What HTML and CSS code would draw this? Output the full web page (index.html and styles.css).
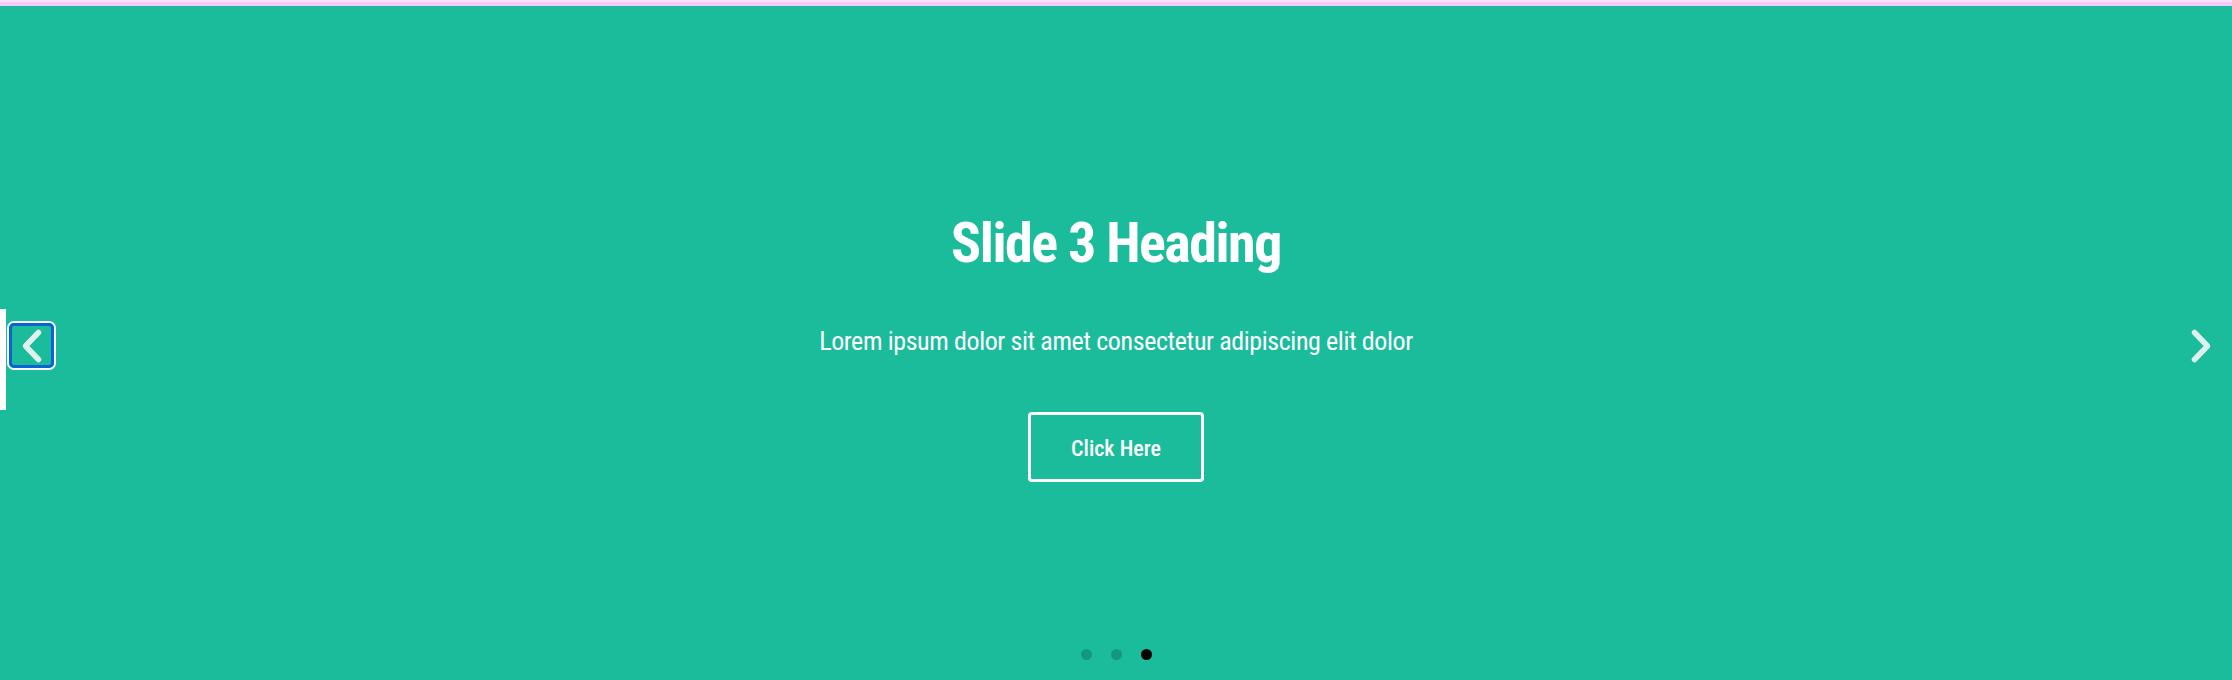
FILE: index.html
```html
<!DOCTYPE html>
<html lang="en">
<head>
<meta charset="utf-8">
<title>Slider</title>
<link rel="stylesheet" href="styles.css">
</head>
<body>
<div class="topbar"></div>
<section class="slider">
  <div class="edge"></div>
  <button class="arrow arrow-prev" aria-label="Previous">
    <svg viewBox="0 0 24 36" width="24" height="36"><path d="M18.5 4.5 L5.5 18 L18.5 31.5" fill="none" stroke="currentColor" stroke-width="5.5" stroke-linecap="round" stroke-linejoin="round"/></svg>
  </button>
  <div class="slide">
    <h2 class="heading">Slide 3 Heading</h2>
    <p class="text">Lorem ipsum dolor sit amet consectetur adipiscing elit dolor</p>
    <a class="cta" href="#">Click Here</a>
  </div>
  <button class="arrow arrow-next" aria-label="Next">
    <svg viewBox="0 0 24 36" width="24" height="36"><path d="M5.5 4.5 L18.5 18 L5.5 31.5" fill="none" stroke="currentColor" stroke-width="5.5" stroke-linecap="round" stroke-linejoin="round"/></svg>
  </button>
  <div class="dots">
    <span class="dot"></span>
    <span class="dot"></span>
    <span class="dot active"></span>
  </div>
</section>
</body>
</html>
```
FILE: styles.css
```css
* { box-sizing: border-box; }
html, body { margin: 0; padding: 0; }
body {
  width: 2232px;
  height: 680px;
  overflow: hidden;
  background: #1abc9c;
  font-family: Roboto, "Open Sans", sans-serif;
  font-stretch: 75%;
}
.topbar {
  height: 6px;
  background: #f3c9f8;
  border-top: 2px solid #f8e2fa;
}
.slider {
  position: relative;
  height: 674px;
  background: #1abc9c;
  display: flex;
  justify-content: center;
}
.slide {
  display: flex;
  flex-direction: column;
  align-items: center;
  padding-top: 209px;
  color: #fff;
}
.heading {
  margin: 0;
  font-size: 56px;
  font-weight: 700;
  line-height: 56px;
  letter-spacing: -1.5px;
}
.text {
  margin: 55px 0 0;
  font-size: 26px;
  line-height: 30px;
  letter-spacing: -0.4px;
}
.cta {
  margin-top: 56px;
  width: 176px;
  height: 70px;
  padding-top: 3px;
  border: 3px solid #fff;
  border-radius: 4px;
  display: flex;
  align-items: center;
  justify-content: center;
  color: #fff;
  text-decoration: none;
  font-size: 22px;
  font-weight: 500;
}
.edge {
  position: absolute;
  left: 0;
  top: 303px;
  width: 6px;
  height: 101px;
  background: #fff;
}
.arrow {
  position: absolute;
  top: 315px;
  width: 49px;
  height: 49px;
  padding: 0;
  background: transparent;
  border: none;
  color: rgba(236, 244, 241, 0.94);
  display: flex;
  align-items: center;
  justify-content: center;
  cursor: pointer;
}
.arrow-prev {
  left: 9px;
  top: 317px;
  width: 45px;
  height: 45px;
  border: 3px solid #0b63d4;
  border-radius: 5px;
  box-shadow: 0 0 0 2px #fff;
}
.arrow-next {
  right: 7px;
}
.dots {
  position: absolute;
  left: 0;
  right: 0;
  bottom: 20px;
  display: flex;
  justify-content: center;
  gap: 19px;
}
.dot {
  width: 11px;
  height: 11px;
  border-radius: 50%;
  background: #15977f;
}
.dot.active { background: #000; }
```
